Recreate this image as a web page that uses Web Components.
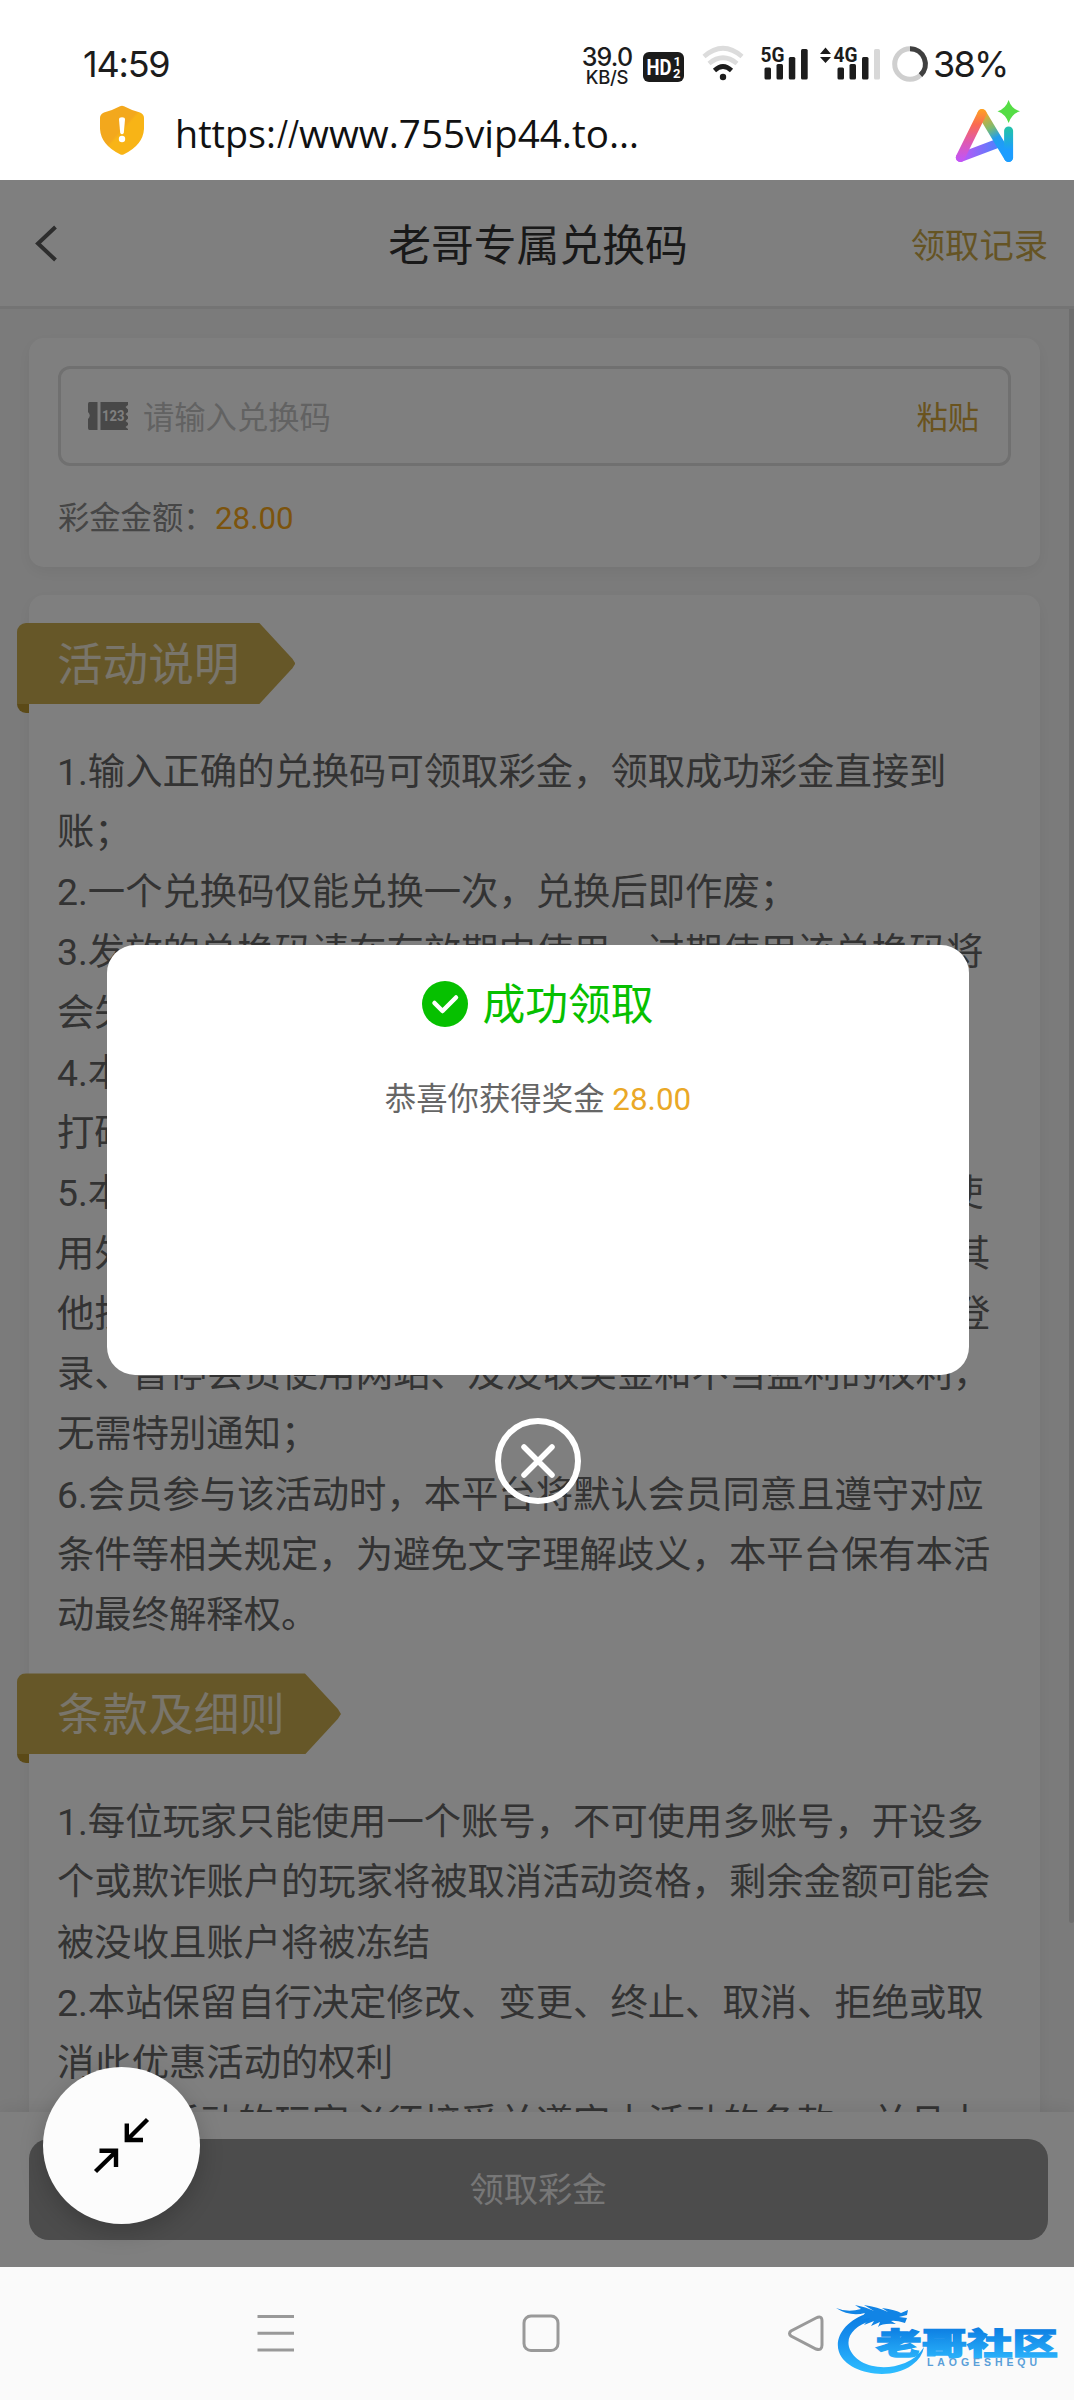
<!DOCTYPE html>
<html lang="zh-CN">
<head>
<meta charset="utf-8">
<title>老哥专属兑换码</title>
<style>
html,body{margin:0;padding:0}
body{width:1074px;height:2400px;overflow:hidden;background:#fff;font-family:Roboto,"Noto Sans CJK SC",sans-serif}
</style>
</head>
<body>
<phone-screen></phone-screen>
<script>
function define(name, html){
  const t=document.createElement('template');
  t.innerHTML=html;
  customElements.define(name,class extends HTMLElement{
    constructor(){super();this.attachShadow({mode:'open'}).appendChild(t.content.cloneNode(true));}
  });
}

define('status-bar',`<style>
:host{display:flex;height:98px;box-sizing:border-box;padding:43px 67px 0 83px;justify-content:space-between;align-items:flex-start;color:#1c1c1c}
.time{font:400 36px/42px Inter,sans-serif;letter-spacing:-1.2px}
.right{display:flex;align-items:flex-start}
.speed{display:flex;flex-direction:column;align-items:center;width:52px;margin-right:10px;font-family:Inter,sans-serif}
.speed b{font:500 25px/24px Inter,sans-serif;letter-spacing:-.8px;margin-top:2px}.speed i{font:500 18.5px/18px Inter,sans-serif;letter-spacing:-.3px;margin-top:-1px}
.pct{font:400 36px/42px Inter,sans-serif;letter-spacing:-1.7px;width:74px;white-space:nowrap}
svg{display:block}
</style>
<span class="time">14:59</span>
<div class="right">
<div class="speed"><b>39.0</b><i>KB/S</i></div>
<svg width="290" height="44" viewBox="643 43 290 44">
<rect x="643" y="52" width="41" height="30" rx="6" fill="#1b1b1b"/>
<text x="646.500" y="74.500" font-family="Roboto" font-weight="700" font-size="22" fill="#fff" textLength="25" lengthAdjust="spacingAndGlyphs">HD</text>
<text x="673.500" y="65.500" font-family="Roboto" font-weight="700" font-size="13" fill="#fff">1</text>
<text x="673" y="78" font-family="Roboto" font-weight="700" font-size="13" fill="#fff">2</text>
<g fill="none" stroke-width="4.600"><path d="M704 56.500Q723 40 742 56.500" stroke="#dcdcdc"/><path d="M709 63.500Q723 52 737 63.500" stroke="#dcdcdc"/><path d="M714.500 70.500Q723 62.500 731.500 70.500" stroke="#1c1c1c"/></g><circle cx="723" cy="77" r="3.200" fill="#1c1c1c"/>
<g fill="#1c1c1c"><rect x="764.500" y="67.500" width="6.500" height="12" rx="1.500"/><rect x="776.500" y="64" width="6.500" height="15.500" rx="1.500"/><rect x="788.800" y="57" width="6.500" height="22.500" rx="1.500"/><rect x="801" y="49" width="6.700" height="30.500" rx="1.500"/>
<rect x="837.500" y="67.500" width="6.500" height="12" rx="1.500"/><rect x="849.500" y="64" width="6.500" height="15.500" rx="1.500"/><rect x="862" y="57" width="6.500" height="22.500" rx="1.500"/>
<path d="M820 54h11l-5.500-6.500zM820 57h11l-5.500 6z"/></g>
<rect x="874" y="49" width="6" height="30.500" rx="1.500" fill="#d8d8d8"/>
<g font-family="Roboto" font-weight="700" font-size="20.500" fill="#1c1c1c" stroke="#fff" stroke-width="2" paint-order="stroke"><text x="760.500" y="62" textLength="24" lengthAdjust="spacingAndGlyphs">5G</text><text x="833.500" y="62" textLength="24" lengthAdjust="spacingAndGlyphs">4G</text></g>
<circle cx="910" cy="64" r="15.300" fill="none" stroke="#cfcfcf" stroke-width="5"/><path d="M910 48.700A15.300 15.300 0 0 1 920.500 75.200" fill="none" stroke="#404040" stroke-width="5"/>
</svg>
<span class="pct">38%</span>
</div>`);

define('url-bar',`<style>
:host{display:flex;height:82px;box-sizing:border-box;padding-left:99px;padding-right:50px;align-items:flex-start}
.u{margin:2px 0 0 30px;flex:1}
svg{display:block}
</style>
<svg width="46" height="52" viewBox="0 0 46 52" style="margin-top:7px"><defs><linearGradient id="s" x1="0" y1="0" x2="1" y2="1"><stop offset=".48" stop-color="#f3a81d"/><stop offset=".52" stop-color="#f8b416"/></linearGradient></defs><path d="M21 1.200Q23 .3 25 1.200Q32 5 41 7.500Q45 9 45 13V24Q44 40 25 49.200Q23 50.500 21 49.200Q2 40 1 24V13Q1 9 5 7.500Q14 5 21 1.200Z" fill="url(#s)"/><path d="M20 14.500Q20 12.200 23 12.200T26 14.500L24.800 28Q23 30.500 21.200 28Z" fill="#fff"/><circle cx="23" cy="34" r="3.200" fill="#fff"/></svg>
<div class="u"><svg width="480" height="78" viewBox="0 0 480 78"><text y="47.500" font-family="Open Sans" font-size="38" fill="#111"><tspan x="0" textLength="101" lengthAdjust="spacingAndGlyphs">https:</tspan><tspan x="102" textLength="22" lengthAdjust="spacingAndGlyphs">//</tspan><tspan x="124" textLength="340" lengthAdjust="spacingAndGlyphs">www.755vip44.to…</tspan></text></svg></div>
<svg width="70" height="72" viewBox="954 98 70 72"><defs><linearGradient id="l" x1="0" y1="160" x2="0" y2="108" gradientUnits="userSpaceOnUse"><stop offset="0" stop-color="#c255f5"/><stop offset=".35" stop-color="#df59b0"/><stop offset=".68" stop-color="#fa6a52"/><stop offset="1" stop-color="#ffa51f"/></linearGradient><linearGradient id="r" x1="982" y1="112" x2="1004" y2="152" gradientUnits="userSpaceOnUse"><stop offset="0" stop-color="#ffa51f"/><stop offset=".4" stop-color="#7cbb70"/><stop offset=".65" stop-color="#219dee"/><stop offset="1" stop-color="#1c9dff"/></linearGradient><linearGradient id="b" x1="960" y1="0" x2="1003" y2="0" gradientUnits="userSpaceOnUse"><stop offset="0" stop-color="#c255f5"/><stop offset="1" stop-color="#3e87ff"/></linearGradient><linearGradient id="i" x1="0" y1="130" x2="0" y2="158" gradientUnits="userSpaceOnUse"><stop offset="0" stop-color="#22c0ae"/><stop offset=".7" stop-color="#1c9dff"/></linearGradient></defs>
<g fill="none" stroke-width="9" stroke-linecap="round" stroke-linejoin="round"><path d="M960.300 157.500L996 144" stroke="url(#b)"/><path d="M982 113.500L1008.500 157.500" stroke="url(#r)"/><path d="M960.300 157.500L982 113.500" stroke="url(#l)"/><path d="M1008.600 131V157.500" stroke="url(#i)"/></g>
<path d="M1008.600 100Q1011.500 109 1020 111.200Q1011.500 114 1008.600 123Q1005.700 114 997.500 111.200Q1005.700 109 1008.600 100Z" fill="#55dd45"/></svg>`);

define('app-header',`<style>
:host{display:grid;grid-template-columns:1fr auto 1fr;align-items:center;height:129px;box-sizing:border-box;padding:0 26px 0 34px;border-bottom:3px solid #e8e8e8;background:#fff;color:#333}
h1{margin:0;font-weight:400;font-size:42.8px;line-height:60px;transform:translate(-3px,3px)}
a{justify-self:end;font-size:34.3px;line-height:50px;color:#cba848;padding-top:5px}
svg{display:block}
</style>
<svg width="24" height="38" viewBox="0 0 24 38"><path d="M21.500 3L4 19.500L21.500 36" fill="none" stroke="#5a5a5a" stroke-width="4"/></svg>
<h1><slot></slot></h1><a>领取记录</a>`);

define('code-card',`<style>
:host{display:block;width:1011px;height:229px;box-sizing:border-box;background:#fff;border-radius:15px;padding:28px 29px;box-shadow:0 5px 16px rgba(0,0,0,.06)}
.in{display:flex;align-items:center;height:100px;box-sizing:border-box;border:3px solid #e0e0e0;border-radius:12px;padding:0 29px 2px 27px;font-size:31.3px}
.ph{flex:1;margin-left:13px;color:#c4c4c4}.p{color:#d4a73c}
.in svg{position:relative;top:1px}
.amt{display:flex;margin-top:30px;font-size:31.3px;line-height:46px;color:#8c8c8c}.amt b{font-weight:400;color:#f8a81a;margin-left:.5px}
</style>
<div class="in"><svg width="42" height="30" viewBox="0 0 42 30"><path d="M1.500 1H9.500V29H1.500Q0 29 0 27V18Q3.500 14.500 0 11V3Q0 1 1.500 1ZM12.500 1H40V4L37.500 6L40 8.500V11L37.500 13L40 15.500V17.500L37.500 20L40 22V24L37.500 26L40 28V29H12.500Z" fill="#909090"/><text x="14" y="20" font-family="Roboto" font-weight="700" font-size="14" fill="#fff" textLength="22.500" lengthAdjust="spacingAndGlyphs">123</text></svg><span class="ph">请输入兑换码</span><span class="p">粘贴</span></div>
<div class="amt"><span>彩金金额：</span><b>28.00</b></div>`);

define('ribbon-title',`<style>
:host{display:block;width:max-content;margin-left:-41px;position:relative}
.r{display:flex;align-items:center;height:81px;padding:0 55px 0 41px;font-size:45.6px;color:#f2ead6;background:#cdae50;border-radius:9px 0 0 0;clip-path:polygon(0 0,calc(100% - 36px) 0,calc(100% - 3px) 44%,100% 50%,calc(100% - 3px) 56%,calc(100% - 36px) 100%,0 100%)}
.t{width:12px;height:9px;background:#b8942f;border-radius:0 0 0 9px}
.r span{transform:translate(-1px,-3px)}
</style><div class="r"><span><slot></slot></span></div><div class="t"></div>`);

define('rule-lines',`<style>
:host{display:block;font-size:37.33px;line-height:60.27px;color:#666;white-space:pre}
</style><slot></slot>`);

define('claim-footer',`<style>
:host{display:block;height:155px;box-sizing:border-box;padding:27px 26px 0 29px;background:#fff;box-shadow:0 -4px 16px rgba(0,0,0,.07);position:relative}
.b{height:101px;border-radius:20px;background:#989898;color:#fff;display:flex;align-items:center;justify-content:center;font-size:34.3px}
.b span{transform:translate(-.5px,-3px);opacity:.85}
</style><div class="b"><span><slot></slot></span></div>`);

define('success-dialog',`<style>
:host{display:flex;flex-direction:column;align-items:center;position:absolute;inset:0;background:rgba(0,0,0,.5);padding-top:764.500px;box-sizing:border-box}
.m{width:862px;height:430px;margin-left:2px;border-radius:28px;background:#fff;display:flex;flex-direction:column;align-items:center}
.t{display:flex;align-items:center;margin-top:28px;height:62px;font-size:42.8px;color:#06c000;gap:14px}
.t span{transform:translateY(-3px)}
.d{margin-top:42px;font-size:31.4px;line-height:46px;color:#666}.d b{font-weight:400;color:#eaa827}
.x{margin-top:42px}
svg{display:block}
</style>
<div class="m"><div class="t"><svg width="46" height="46" viewBox="0 0 46 46"><circle cx="23" cy="23" r="23" fill="#06c000"/><path d="M12.500 22L20.500 30L34 16.500" fill="none" stroke="#fff" stroke-width="4.500" stroke-linecap="round" stroke-linejoin="round"/></svg><span>成功领取</span></div>
<div class="d">恭喜你获得奖金 <b>28.00</b></div></div>
<svg class="x" width="88" height="88" viewBox="0 0 88 88"><g fill="none" stroke="#fff"><circle cx="45" cy="44" r="40" stroke-width="6"/><path d="M31 30L59 58M59 30L31 58" stroke-width="5.500" stroke-linecap="round"/></g></svg>`);

define('float-button',`<style>
:host{display:block;position:absolute;left:42.5px;top:1887px;width:157px;height:157px;border-radius:50%;background:#fcfcfc;box-shadow:0 8px 24px rgba(0,0,0,.2)}
</style><svg width="157" height="157" viewBox="43 2067 157 157"><g fill="none" stroke="#000" stroke-width="4.400"><path d="M147.500 2119.500L127 2140M126.800 2123.500V2140H143"/><path d="M95.500 2171.500L116.500 2151M99.500 2150.800H116V2167"/></g></svg>`);

define('nav-bar',`<style>
:host{display:block;height:133px;background:#fafafa;position:relative}
.row{display:flex;align-items:center;justify-content:space-between;padding:47px 249px 0 256px}
.logo{position:absolute;left:830px;top:30px}
svg{display:block}
</style>
<div class="row">
<svg width="40" height="40" viewBox="256 2314 40 40"><path d="M257.500 2316.500H294M257.500 2333.300H294M257.500 2350H294" stroke="#999" stroke-width="3"/></svg>
<svg width="40" height="40" viewBox="522.500 2314 40 40"><rect x="524.500" y="2316" width="34" height="34.500" rx="7" fill="none" stroke="#999" stroke-width="3"/></svg>
<svg width="38" height="40" viewBox="787 2314 38 40"><path d="M791 2331Q788 2333.500 791 2336L816 2349Q822 2351 822 2345V2321Q822 2315 816 2318Z" fill="none" stroke="#999" stroke-width="3"/></svg>
</div>
<svg class="logo" width="240" height="84" viewBox="830 2297 240 84"><defs><linearGradient id="g" x1="0" y1="2310" x2="0" y2="2372" gradientUnits="userSpaceOnUse"><stop offset="0" stop-color="#0879df"/><stop offset=".45" stop-color="#178fee"/><stop offset="1" stop-color="#2dbcff"/></linearGradient><linearGradient id="h" x1="0" y1="0" x2="0" y2="1"><stop offset=".2" stop-color="#0c7de2"/><stop offset=".9" stop-color="#29b1fa"/></linearGradient></defs>
<path d="M869 2313C845 2320 834 2338 839 2352C846 2373 889 2382 912 2365Q922 2358 924 2347Q917 2358 905 2363C880 2373 854 2364 849 2347C846 2335 856 2325 871 2321Z" fill="url(#g)"/>
<path d="M836 2308Q848 2313 861 2309L855 2305Q866 2307 874 2311L864 2305Q878 2307 888 2312L882 2308Q896 2310 901 2313L908 2310L907 2315L899 2317L907 2318L905 2323Q895 2320 891 2321L896 2324Q882 2323 878 2327L880 2322L871 2326L874 2321L864 2325L870 2318L860 2320L865 2313Q850 2317 836 2308Z" fill="#1184e5"/>
<text x="876" y="2353.500" font-family="Noto Sans CJK SC" font-weight="900" font-size="30" fill="url(#h)" stroke="url(#h)" stroke-width="1.300" textLength="182" lengthAdjust="spacingAndGlyphs">老哥社区</text>
<text x="927" y="2366" font-family="Liberation Sans" font-weight="700" font-size="10.500" fill="#5a9fd8" textLength="110">LAOGESHEQU</text></svg>`);

define('promo-page',`<style>
:host{display:flex;flex-direction:column;height:2087px;position:relative;overflow:hidden;background:#f7f7f7}
.scroll{flex:1;min-height:0;overflow:hidden;display:flex;justify-content:space-between;padding-left:29px}
.col{padding-top:29px;display:flex;flex-direction:column;gap:28px}
.card{width:1011px;height:1700px;box-sizing:border-box;background:#fff;border-radius:15px;padding:28px 0 0 29px;box-shadow:0 5px 16px rgba(0,0,0,.06)}
.thumb{width:5px;height:1614px;background:#ddd;border-radius:0 0 3px 3px}
rule-lines.a{margin:28.500px 0 28px -1px}rule-lines.b{margin:28.500px 0 0 -1px}
</style>
<app-header>老哥专属兑换码</app-header>
<div class="scroll"><div class="col"><code-card></code-card>
<div class="card"><ribbon-title>活动说明</ribbon-title>
<rule-lines class="a">1.输入正确的兑换码可领取彩金，领取成功彩金直接到
账；
2.一个兑换码仅能兑换一次，兑换后即作废；
3.发放的兑换码请在有效期内使用，过期使用该兑换码将
会失效；
4.本活动彩金只需要一倍流水即可提款，严禁恶意刷水、
打码等违规行为；
5.本平台严禁会员作弊行为，一经发现会员以任何方式使
用外挂程序、机器人、恶意套利、多账号操作或者利用其
他技术手段参与活动，本平台有权冻结会员账号并禁止登
录、暂停会员使用网站、及没收奖金和不当盈利的权利，
无需特别通知；
6.会员参与该活动时，本平台将默认会员同意且遵守对应
条件等相关规定，为避免文字理解歧义，本平台保有本活
动最终解释权。</rule-lines>
<ribbon-title>条款及细则</ribbon-title>
<rule-lines class="b">1.每位玩家只能使用一个账号，不可使用多账号，开设多
个或欺诈账户的玩家将被取消活动资格，剩余金额可能会
被没收且账户将被冻结
2.本站保留自行决定修改、变更、终止、取消、拒绝或取
消此优惠活动的权利
3.参加活动的玩家必须接受并遵守本活动的条款，并且本</rule-lines></div></div>
<div class="thumb"></div></div>
<claim-footer>领取彩金</claim-footer>
<success-dialog></success-dialog>
<float-button></float-button>`);

define('phone-screen',`<style>:host{display:flex;flex-direction:column;width:1074px;height:2400px;background:#fff}</style>
<status-bar></status-bar><url-bar></url-bar><promo-page></promo-page><nav-bar></nav-bar>`);
</script>
</body>
</html>
